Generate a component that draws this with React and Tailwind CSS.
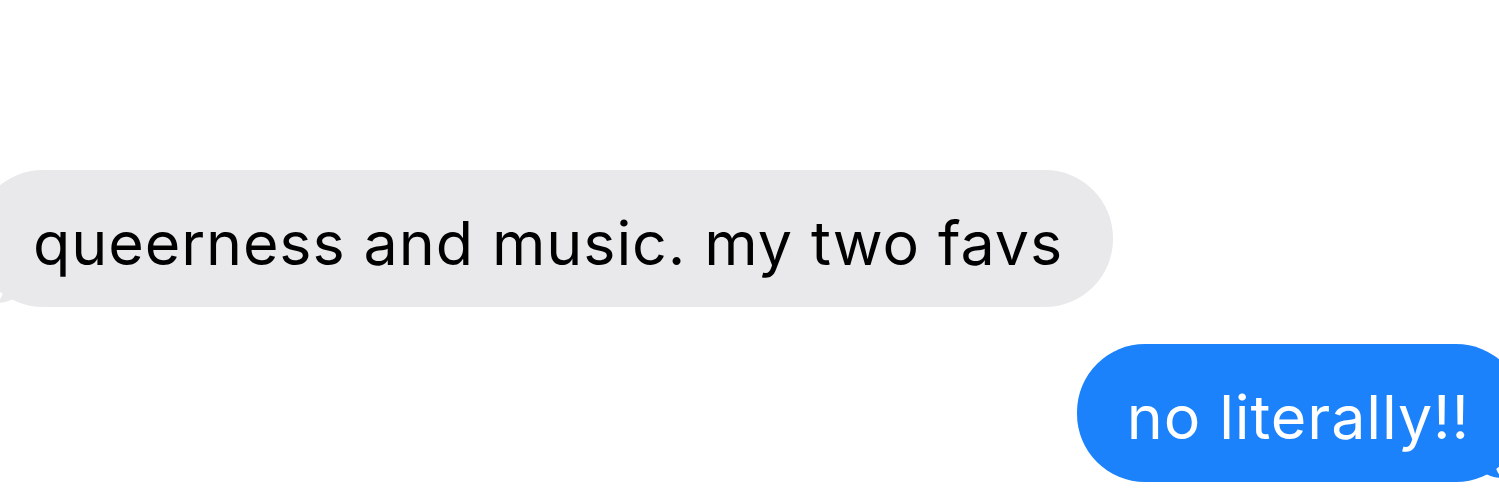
export default function App() {
  return (
    <div className="h-[499px] w-[1499px] overflow-hidden bg-white font-['Inter','Noto_Sans',sans-serif]">
      <div className="flex flex-col pt-[170px]">
        <div className="relative ml-[-25px] self-start">
          <div className="flex h-[137px] items-center rounded-[68px] bg-[#e9e9eb] pl-[58px] pr-[50px] pt-[10px]">
            <span className="whitespace-nowrap text-[61px] leading-none tracking-[0.9px] text-black">
              queerness and music. my two favs
            </span>
          </div>
          <svg className="absolute bottom-[2px] left-[18px]" width="30" height="26" viewBox="0 0 30 26">
            <path d="M12 0 C12 10 10 18 4 24 C12 24 20 21 26 16 L26 0 Z" fill="#e9e9eb" />
          </svg>
        </div>

        <div className="relative mr-[-25px] mt-[37px] self-end">
          <div className="flex h-[138px] items-center rounded-[68px] bg-[#1b82fb] pl-[50px] pr-[54px] pt-[8px]">
            <span className="whitespace-nowrap text-[61px] leading-none tracking-[0.9px] text-white">
              no literally!!
            </span>
          </div>
          <svg className="absolute bottom-[2px] right-[18px]" width="30" height="26" viewBox="0 0 30 26">
            <path d="M18 0 C18 10 20 18 26 24 C18 24 10 21 4 16 L4 0 Z" fill="#1b82fb" />
          </svg>
        </div>
      </div>
    </div>
  );
}
